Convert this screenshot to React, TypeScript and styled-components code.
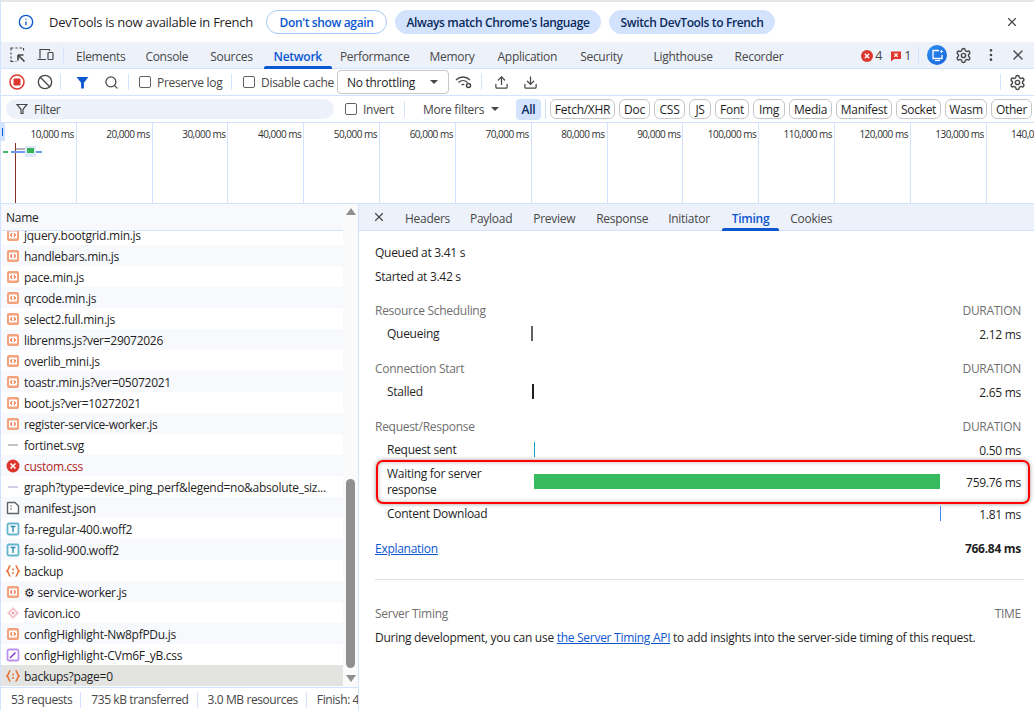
import React from "react";
import styled, { createGlobalStyle } from "styled-components";
import { Ban, Download, EllipsisVertical, Info, Search, Settings, Upload, X } from "lucide-react";

const GlobalStyle = createGlobalStyle`
  html, body {
    margin: 0;
    padding: 0;
    background: #fff;
  }
  body {
    font-family: "Open Sans", "Noto Sans", "Liberation Sans", sans-serif;
    font-size: 12px;
    letter-spacing: -0.28px;
    color: #1f1f1f;
  }
  * {
    box-sizing: border-box;
  }
`;

const Page = styled.div`
  width: 1034px;
  height: 710px;
  overflow: hidden;
  display: flex;
  flex-direction: column;
  border-top: 2px solid #e6e6e6;
  border-left: 1px solid #d3e3fd;
`;

const InfoBar = styled.div`
  height: 40px;
  flex: none;
  display: flex;
  align-items: center;
  padding: 0 15px 0 17px;
`;

const InfoText = styled.span`
  margin-left: 15px;
  margin-right: 15px;
  width: 202px;
  font-size: 13px;
  white-space: nowrap;
`;

const Pill = styled.button<{ $outline?: boolean; $w: number }>`
  width: ${(p) => p.$w}px;
  height: 24px;
  padding: 0;
  margin-right: 8px;
  border-radius: 12px;
  font: inherit;
  font-weight: 600;
  letter-spacing: -0.36px;
  white-space: nowrap;
  border: 1px solid ${(p) => (p.$outline ? "#a8c7fa" : "#d3e3fd")};
  background: ${(p) => (p.$outline ? "#fff" : "#d3e3fd")};
  color: ${(p) => (p.$outline ? "#0b57d0" : "#0a2a5c")};
`;

const Spacer = styled.div`
  flex: 1;
`;

const TabBar = styled.div`
  height: 27px;
  flex: none;
  display: flex;
  align-items: center;
  padding-left: 9px;
  background: #edf2fa;
  border-bottom: 1px solid #d3e3fd;
`;

const TabIconBox = styled.div`
  display: flex;
  align-items: center;
  gap: 11px;
  padding-right: 9px;
  margin-right: 2px;
  height: 16px;
  border-right: 1px solid #d3e3fd;
`;

const Tab = styled.div<{ $active?: boolean; $pad?: number }>`
  position: relative;
  height: 100%;
  display: flex;
  align-items: center;
  padding: 2px 10px 0;
  margin-left: ${(p) => p.$pad ?? 0}px;
  white-space: nowrap;
  color: ${(p) => (p.$active ? "#0b57d0" : "#474747")};
  font-weight: ${(p) => (p.$active ? 600 : 400)};
  ${(p) =>
    p.$active &&
    `
    &::after {
      content: "";
      position: absolute;
      left: 0;
      right: 0;
      bottom: -1px;
      height: 3px;
      border-radius: 2px 2px 0 0;
      background: #0b57d0;
    }
  `}
`;

const Counter = styled.div`
  display: flex;
  align-items: center;
  gap: 1px;
  margin-right: 7px;
  padding-top: 1px;
  color: #474747;
  font-size: 12.5px;
`;

const VerticalRule = styled.div`
  width: 1px;
  height: 16px;
  flex: none;
  background: #d3e3fd;
`;

const TabActions = styled.div`
  display: flex;
  align-items: center;
  padding-right: 3px;
`;

const ActionSlot = styled.div`
  width: 27px;
  display: flex;
  justify-content: center;
  color: #474747;
`;

const AiBadge = styled.div`
  width: 20px;
  height: 20px;
  margin: 0 3px 0 8px;
  border-radius: 50%;
  display: flex;
  align-items: center;
  justify-content: center;
  background: linear-gradient(135deg, #2c8df4, #1a66d8);
`;

const Toolbar = styled.div`
  height: 27px;
  flex: none;
  display: flex;
  align-items: center;
  border-bottom: 1px solid #d3e3fd;
  color: #474747;
`;

const ToolSlot = styled.div<{ $w: number }>`
  width: ${(p) => p.$w}px;
  flex: none;
  display: flex;
  justify-content: center;
  align-items: center;
`;

const CheckLabel = styled.label<{ $w: number }>`
  width: ${(p) => p.$w}px;
  flex: none;
  display: flex;
  align-items: center;
  gap: 6px;
  color: #474747;
  white-space: nowrap;
`;

const CheckBox = styled.span`
  width: 12px;
  height: 12px;
  flex: none;
  border: 1px solid #5f6368;
  border-radius: 2px;
  background: #fff;
`;

const ThrottleSelect = styled.div`
  width: 112px;
  height: 24px;
  flex: none;
  margin-left: 6px;
  padding: 0 10px 0 9px;
  display: flex;
  align-items: center;
  justify-content: space-between;
  border: 1px solid #c7c7c7;
  border-radius: 4px;
  color: #1f1f1f;
`;

const CaretDown = styled.span`
  width: 0;
  height: 0;
  border-left: 4px solid transparent;
  border-right: 4px solid transparent;
  border-top: 4px solid #474747;
`;

const FilterBar = styled.div`
  height: 27px;
  flex: none;
  display: flex;
  align-items: center;
  padding-left: 5px;
  border-bottom: 1px solid #d3e3fd;
`;

const FilterInput = styled.div`
  width: 328px;
  height: 20px;
  flex: none;
  display: flex;
  align-items: center;
  gap: 6px;
  padding-left: 10px;
  margin-right: 11px;
  border-radius: 10px;
  background: #edf2fa;
  color: #474747;
`;

const MoreFilters = styled.div`
  display: flex;
  align-items: center;
  gap: 7px;
  margin-left: 18px;
  width: 93px;
  color: #474747;
`;

const TypeAll = styled.div`
  width: 25px;
  height: 21px;
  flex: none;
  display: flex;
  align-items: center;
  justify-content: center;
  border-radius: 4px;
  background: #d3e3fd;
  font-weight: 600;
  color: #0a2a5c;
`;

const Chips = styled.div`
  display: flex;
  gap: 4px;
  margin-left: 4px;
  padding-left: 4px;
  border-left: 1px solid #d3e3fd;
`;

const Chip = styled.div<{ $w: number }>`
  width: ${(p) => p.$w}px;
  height: 20px;
  flex: none;
  display: flex;
  align-items: center;
  justify-content: center;
  border: 1px solid #c7c7c7;
  border-radius: 6px;
  color: #1f1f1f;
  white-space: nowrap;
`;

const Overview = styled.div`
  position: relative;
  height: 81px;
  flex: none;
  display: flex;
  overflow: hidden;
  border-bottom: 1px solid #d3e3fd;
`;

const GridCell = styled.div`
  width: 75.83px;
  flex: none;
  padding: 4px 2px 0 0;
  display: flex;
  justify-content: flex-end;
  white-space: nowrap;
  font-size: 10px;
  letter-spacing: -0.5px;
  color: #303030;
  border-right: 1px solid #d3e3fd;
`;

const OverviewChart = styled.svg`
  position: absolute;
  left: 0;
  top: 0;
`;

const Split = styled.div`
  flex: 1;
  min-height: 0;
  display: flex;
`;

const LeftPane = styled.div`
  width: 358px;
  flex: none;
  display: flex;
  flex-direction: column;
  border-right: 1px solid #d3e3fd;
`;

const TableWrap = styled.div`
  flex: 1;
  min-height: 0;
  display: flex;
`;

const TableColumn = styled.div`
  width: 342px;
  flex: none;
  display: flex;
  flex-direction: column;
`;

const NameHeader = styled.div`
  height: 27px;
  flex: none;
  padding: 1px 0 0 5px;
  display: flex;
  align-items: center;
  background: #f8f9fd;
  border-bottom: 1px solid #d3e3fd;
  color: #1f1f1f;
`;

const RowList = styled.div`
  flex: 1;
  min-height: 0;
  overflow: hidden;
`;

const RowScroll = styled.div`
  margin-top: -7px;
`;

const FileRow = styled.div<{ $selected?: boolean; $odd?: boolean; $error?: boolean }>`
  height: 21px;
  display: flex;
  align-items: center;
  gap: 4px;
  padding: 1px 0 0 5px;
  white-space: nowrap;
  background: ${(p) => (p.$selected ? "#e3e3e1" : p.$odd ? "#f8f9fd" : "#fff")};
  color: ${(p) => (p.$error ? "#b3261e" : "#1f1f1f")};
`;

const Scrollbar = styled.div`
  flex: 1;
  display: flex;
  flex-direction: column;
  align-items: center;
  padding: 4px 0 5px;
  background: #fafafa;
`;

const ArrowUp = styled.span`
  width: 0;
  height: 0;
  flex: none;
  border-left: 5px solid transparent;
  border-right: 5px solid transparent;
  border-bottom: 7px solid #8f8f8f;
`;

const ArrowDown = styled(ArrowUp)`
  border-bottom: 0;
  border-top: 7px solid #8f8f8f;
  margin-top: 7px;
`;

const Thumb = styled.div`
  width: 9px;
  height: 189px;
  flex: none;
  margin-top: auto;
  border-radius: 5px;
  background: #8f8f8f;
`;

const StatusBar = styled.div`
  height: 23px;
  flex: none;
  display: flex;
  align-items: center;
  padding-top: 1px;
  overflow: hidden;
  white-space: nowrap;
  border-top: 1px solid #d3e3fd;
  color: #474747;
  letter-spacing: -0.4px;
`;

const StatusItem = styled.div`
  height: 16px;
  display: flex;
  align-items: center;
  padding: 0 8px 0 10px;
  border-right: 1px solid #d3e3fd;
  &:last-child {
    border-right: 0;
  }
`;

const RightPane = styled.div`
  flex: 1;
  min-width: 0;
  display: flex;
  flex-direction: column;
`;

const DetailTabs = styled.div`
  height: 27px;
  flex: none;
  display: flex;
  align-items: center;
  padding-left: 13px;
  background: #edf2fa;
  border-bottom: 1px solid #d3e3fd;
`;

const CloseSlot = styled.div`
  width: 23px;
  display: flex;
  color: #474747;
`;

const TimingBody = styled.div`
  flex: 1;
  padding: 9px 13px 0 16px;
`;

const Line = styled.div`
  height: 24px;
  display: flex;
  align-items: center;
  color: #1f1f1f;
  white-space: nowrap;
`;

const SectionHead = styled.div`
  height: 24px;
  margin-top: 10px;
  display: flex;
  align-items: center;
  justify-content: space-between;
  color: #6f6f6f;
`;

const TimingRow = styled.div<{ $tall?: boolean; $marked?: boolean }>`
  position: relative;
  height: ${(p) => (p.$tall ? 40 : 24)}px;
  display: flex;
  align-items: center;
  padding-left: 12px;
  ${(p) =>
    p.$marked &&
    `
    &::after {
      content: "";
      position: absolute;
      top: -2px;
      bottom: -2px;
      left: 1px;
      right: -9px;
      border: 2px solid #f00;
      border-radius: 7px;
      box-shadow: 0 0 4px rgba(0, 0, 0, 0.4), inset 0 0 4px rgba(0, 0, 0, 0.3);
    }
  `}
`;

const RowLabel = styled.div`
  width: 144px;
  flex: none;
  padding-right: 34px;
  line-height: 16px;
`;

const BarTrack = styled.div`
  width: 410px;
  flex: none;
  display: flex;
  margin-top: -1px;
`;

const Bar = styled.div<{ $color: string; $min: number }>`
  height: 15px;
  min-width: ${(p) => p.$min}px;
  background: ${(p) => p.$color};
`;

const RowValue = styled.div`
  flex: 1;
  text-align: right;
  color: #1f1f1f;
`;

const TotalRow = styled.div`
  height: 24px;
  margin-top: 10px;
  display: flex;
  align-items: center;
  justify-content: space-between;
  font-weight: 700;
`;

const DocLink = styled.a`
  color: #0b57d0;
  text-decoration: underline;
  font-weight: 400;
`;

const Divider = styled.div`
  height: 1px;
  margin: 19px -3px 21px 0;
  background: #e0e0e0;
`;

type FileKind = "script" | "xhr" | "svg" | "error" | "graph" | "manifest" | "font" | "css" | "favicon";

function FileIcon({ kind }: { kind: FileKind }) {
  const shape = () => {
    switch (kind) {
      case "script":
        return (
          <>
            <rect x="1" y="1" width="12" height="12" rx="2" fill="#f4a27c" />
            <rect x="3" y="3.5" width="8" height="7" rx="0.5" fill="#fff" />
            <path d="M6 5.3 4.6 7 6 8.7M8 5.3 9.4 7 8 8.7" stroke="#e8622a" fill="none" strokeWidth="1.1" />
          </>
        );
      case "xhr":
        return (
          <>
            <path
              d="M4.5 1.5C2.5 1.5 3.2 5.8 1 7c2.2 1.2 1.5 5.5 3.5 5.5M9.5 1.5c2 0 1.3 4.3 3.5 5.5-2.2 1.2-1.5 5.5-3.5 5.5"
              stroke="#e8743b"
              strokeWidth="1.7"
              fill="none"
            />
            <circle cx="7" cy="5.5" r="1" fill="#e8743b" />
            <circle cx="7" cy="9" r="1" fill="#e8743b" />
          </>
        );
      case "svg":
        return <rect x="2" y="6.5" width="10" height="1" fill="#8a8a8a" />;
      case "error":
        return (
          <>
            <circle cx="7" cy="7" r="6.5" fill="#dc362e" />
            <path d="M4.5 4.5l5 5M9.5 4.5l-5 5" stroke="#fff" strokeWidth="1.6" />
          </>
        );
      case "graph":
        return <rect x="2" y="6" width="10" height="2" fill="#d0d0e8" />;
      case "manifest":
        return (
          <>
            <path d="M1.5 1.5h7.5l3.5 3.5v7.5h-11z" fill="#fff" stroke="#5f6368" strokeWidth="1.4" strokeLinejoin="round" />
            <path d="M4.5 5h1.2M4.5 8h1.2" stroke="#5f6368" strokeWidth="1.3" />
          </>
        );
      case "font":
        return (
          <>
            <rect x="1.5" y="1.5" width="11" height="11" rx="1.5" fill="#fff" stroke="#62b5cc" strokeWidth="1.8" />
            <path d="M4.5 4.5h5M7 4.5v5.5" stroke="#2a8ba8" strokeWidth="1.4" fill="none" />
          </>
        );
      case "css":
        return (
          <>
            <rect x="1.5" y="1.5" width="11" height="11" rx="1.5" fill="#fff" stroke="#bd92f2" strokeWidth="1.8" />
            <path d="M4 10l5.5-5.5" stroke="#8430ce" strokeWidth="1.5" />
          </>
        );
      case "favicon":
        return (
          <>
            <path d="M7 1 13 7 7 13 1 7z" fill="#f3c6cc" />
            <path d="M7 3.8 10.2 7 7 10.2 3.8 7z" fill="#fff" />
            <path d="M7 5.3 8.7 7 7 8.7 5.3 7z" fill="#e5a3ac" />
          </>
        );
    }
  };
  return (
    <svg width="14" height="14" viewBox="0 0 14 14" style={{ flex: "none" }}>
      {shape()}
    </svg>
  );
}

function SelectIcon() {
  return (
    <svg width="16" height="16" viewBox="0 0 16 16" fill="none" stroke="#474747" strokeWidth="1.2">
      <path d="M1 3.5V1h2.5M5.5 1h2M9.5 1h2.5M13.5 1v2.5M1 5.5v2M1 9.5v2M1 13v1.5h2.5M5.5 14.5h1" />
      <path d="M8 8h5.5M8 8v5.5M8 8l6.5 6.5" strokeWidth="1.7" />
    </svg>
  );
}

function DeviceIcon() {
  return (
    <svg width="17" height="14" viewBox="0 0 17 14" fill="none" stroke="#474747" strokeWidth="1.2">
      <path d="M3 10.5V1.5h9.5V3M0.5 11.5H9" />
      <rect x="11" y="4.5" width="5" height="7" rx="0.8" />
    </svg>
  );
}

function RecordIcon() {
  return (
    <svg width="16" height="16" viewBox="0 0 16 16">
      <circle cx="8" cy="8" r="7" fill="none" stroke="#dc362e" strokeWidth="1.5" />
      <rect x="4.5" y="4.5" width="7" height="7" rx="1" fill="#dc362e" />
    </svg>
  );
}

function FunnelIcon({ color, size }: { color: string; size: number }) {
  return (
    <svg width={size} height={size} viewBox="0 0 12 12">
      <path d="M0.5 1h11L7.3 6.3V11.5H4.7V6.3z" fill={color} />
    </svg>
  );
}

function OutlineFunnel() {
  return (
    <svg width="12" height="12" viewBox="0 0 12 12" fill="none" stroke="#474747" strokeWidth="1.2">
      <path d="M1 1.5h10L7 6.3v4.2H5V6.3z" />
    </svg>
  );
}

function WifiGearIcon() {
  return (
    <svg width="18" height="14" viewBox="0 0 18 14" fill="none" stroke="#474747" strokeWidth="1.3">
      <path d="M1 5c4-4 10-4 14 0M3.5 7.5c2.6-2.4 6.4-2.4 9 0M6.5 10c.8-.6 2-.7 2.8-.4" />
      <circle cx="13.5" cy="10.5" r="2" strokeWidth="1.5" />
    </svg>
  );
}

function ErrorBadge() {
  return (
    <svg width="14" height="14" viewBox="0 0 14 14">
      <circle cx="7" cy="7" r="6" fill="#dc362e" />
      <path d="M4.8 4.8l4.4 4.4M9.2 4.8l-4.4 4.4" stroke="#fff" strokeWidth="1.4" />
    </svg>
  );
}

function IssueBadge() {
  return (
    <svg width="14" height="14" viewBox="0 0 14 14">
      <path d="M2 2.5h10v7.5H5L2 12.5z" fill="#dc362e" />
      <path d="M5.3 4.5l3.4 3.4M8.7 4.5 5.3 7.9" stroke="#fff" strokeWidth="1.1" />
    </svg>
  );
}

function AiIcon() {
  return (
    <svg width="13" height="13" viewBox="0 0 13 13" fill="none">
      <path d="M8 1.5H2v8h9V6" stroke="#fff" strokeWidth="1.3" />
      <path d="M4 11.5h5" stroke="#fff" strokeWidth="1.2" />
      <path d="M10.5 0.5l.6 1.4 1.4.6-1.4.6-.6 1.4-.6-1.4-1.4-.6 1.4-.6z" fill="#fff" />
    </svg>
  );
}

const TOP_TABS: [string, number][] = [
  ["Elements", 0],
  ["Console", 0],
  ["Sources", 2],
  ["Network", 1],
  ["Performance", -2],
  ["Memory", 0],
  ["Application", 3],
  ["Security", 3],
  ["Lighthouse", 11],
  ["Recorder", 2],
];

const DETAIL_TABS: [string, number][] = [
  ["Headers", 0],
  ["Payload", 0],
  ["Preview", 1],
  ["Response", 1],
  ["Initiator", 0],
  ["Timing", 2],
  ["Cookies", 1],
];

const TYPE_CHIPS: [string, number][] = [
  ["Fetch/XHR", 65],
  ["Doc", 31],
  ["CSS", 31],
  ["JS", 22],
  ["Font", 34],
  ["Img", 32],
  ["Media", 43],
  ["Manifest", 56],
  ["Socket", 45],
  ["Wasm", 42],
  ["Other", 41],
];

const FILES: [string, FileKind][] = [
  ["jquery.bootgrid.min.js", "script"],
  ["handlebars.min.js", "script"],
  ["pace.min.js", "script"],
  ["qrcode.min.js", "script"],
  ["select2.full.min.js", "script"],
  ["librenms.js?ver=29072026", "script"],
  ["overlib_mini.js", "script"],
  ["toastr.min.js?ver=05072021", "script"],
  ["boot.js?ver=10272021", "script"],
  ["register-service-worker.js", "script"],
  ["fortinet.svg", "svg"],
  ["custom.css", "error"],
  ["graph?type=device_ping_perf&legend=no&absolute_siz...", "graph"],
  ["manifest.json", "manifest"],
  ["fa-regular-400.woff2", "font"],
  ["fa-solid-900.woff2", "font"],
  ["backup", "xhr"],
  ["⚙ service-worker.js", "script"],
  ["favicon.ico", "favicon"],
  ["configHighlight-Nw8pfPDu.js", "script"],
  ["configHighlight-CVm6F_yB.css", "css"],
  ["backups?page=0", "xhr"],
];

const TOTAL_MS = 766.84;
const TRACK_PX = 410;
const px = (ms: number) => (ms / TOTAL_MS) * TRACK_PX;

function Phase(props: {
  label: string;
  start: number;
  ms: number;
  color: string;
  min?: number;
  tall?: boolean;
  marked?: boolean;
}) {
  return (
    <TimingRow $tall={props.tall} $marked={props.marked}>
      <RowLabel>{props.label}</RowLabel>
      <BarTrack>
        <Bar $color={props.color} $min={props.min ?? 1} style={{ marginLeft: px(props.start), width: px(props.ms) }} />
      </BarTrack>
      <RowValue>{props.ms.toFixed(2)} ms</RowValue>
    </TimingRow>
  );
}

export default function App() {
  return (
    <Page>
      <GlobalStyle />
      <InfoBar>
        <Info size={16} color="#0b57d0" />
        <InfoText>DevTools is now available in French</InfoText>
        <Pill $outline $w={121}>
          Don't show again
        </Pill>
        <Pill $w={206}>Always match Chrome's language</Pill>
        <Pill $w={166}>Switch DevTools to French</Pill>
        <Spacer />
        <X size={14} color="#474747" />
      </InfoBar>

      <TabBar>
        <TabIconBox>
          <SelectIcon />
          <DeviceIcon />
        </TabIconBox>
        {TOP_TABS.map(([name, pad]) => (
          <Tab key={name} $active={name === "Network"} $pad={pad}>
            {name}
          </Tab>
        ))}
        <Spacer />
        <Counter>
          <ErrorBadge />4
        </Counter>
        <Counter>
          <IssueBadge />1
        </Counter>
        <TabActions>
          <VerticalRule />
          <AiBadge>
            <AiIcon />
          </AiBadge>
          <ActionSlot>
            <Settings size={17} />
          </ActionSlot>
          <ActionSlot>
            <EllipsisVertical size={16} />
          </ActionSlot>
          <ActionSlot>
            <X size={16} />
          </ActionSlot>
        </TabActions>
      </TabBar>

      <Toolbar>
        <ToolSlot $w={32}>
          <RecordIcon />
        </ToolSlot>
        <ToolSlot $w={24}>
          <Ban size={16} />
        </ToolSlot>
        <ToolSlot $w={6}>
          <VerticalRule />
        </ToolSlot>
        <ToolSlot $w={38}>
          <FunnelIcon color="#0b57d0" size={13} />
        </ToolSlot>
        <ToolSlot $w={20}>
          <Search size={15} />
        </ToolSlot>
        <ToolSlot $w={14}>
          <VerticalRule />
        </ToolSlot>
        <ToolSlot $w={4} />
        <CheckLabel $w={92}>
          <CheckBox />
          Preserve log
        </CheckLabel>
        <ToolSlot $w={1}>
          <VerticalRule />
        </ToolSlot>
        <ToolSlot $w={11} />
        <CheckLabel $w={88}>
          <CheckBox />
          Disable cache
        </CheckLabel>
        <ThrottleSelect>
          No throttling
          <CaretDown />
        </ThrottleSelect>
        <ToolSlot $w={30}>
          <WifiGearIcon />
        </ToolSlot>
        <ToolSlot $w={5}>
          <VerticalRule />
        </ToolSlot>
        <ToolSlot $w={35}>
          <Upload size={15} />
        </ToolSlot>
        <ToolSlot $w={22}>
          <Download size={15} />
        </ToolSlot>
        <Spacer />
        <VerticalRule />
        <ToolSlot $w={33}>
          <Settings size={17} />
        </ToolSlot>
      </Toolbar>

      <FilterBar>
        <FilterInput>
          <OutlineFunnel />
          Filter
        </FilterInput>
        <CheckLabel $w={59}>
          <CheckBox />
          Invert
        </CheckLabel>
        <VerticalRule />
        <MoreFilters>
          More filters
          <CaretDown />
        </MoreFilters>
        <TypeAll>All</TypeAll>
        <Chips>
          {TYPE_CHIPS.map(([name, width]) => (
            <Chip key={name} $w={width}>
              {name}
            </Chip>
          ))}
        </Chips>
      </FilterBar>

      <Overview>
        {Array.from({ length: 14 }, (_, i) => (
          <GridCell key={i}>{((i + 1) * 10).toLocaleString("en-US")},000 ms</GridCell>
        ))}
        <OverviewChart width="60" height="80" viewBox="0 0 60 80">
          <rect x="0" y="0" width="4" height="18" rx="1" fill="#d3e3fd" />
          <rect x="1" y="5" width="1" height="8" fill="#0b57d0" />
          <rect x="14" y="20" width="1" height="60" fill="#8c2f2a" />
          <rect x="2" y="28" width="5" height="2" fill="#3dbb61" />
          <rect x="10" y="28" width="31" height="2" fill="#6c9cf0" />
          <rect x="15" y="25" width="10" height="2" fill="#b5b5b5" />
          <rect x="24" y="23" width="11" height="11" fill="#dde8fa" />
          <rect x="26" y="25" width="7" height="5" fill="#36b35a" />
        </OverviewChart>
      </Overview>

      <Split>
        <LeftPane>
          <TableWrap>
            <TableColumn>
              <NameHeader>Name</NameHeader>
              <RowList>
                <RowScroll>
                  {FILES.map(([name, kind], i) => (
                    <FileRow
                      key={name}
                      $odd={i % 2 === 1}
                      $selected={name === "backups?page=0"}
                      $error={kind === "error"}
                    >
                      <FileIcon kind={kind} />
                      {name}
                    </FileRow>
                  ))}
                </RowScroll>
              </RowList>
            </TableColumn>
            <Scrollbar>
              <ArrowUp />
              <Thumb />
              <ArrowDown />
            </Scrollbar>
          </TableWrap>
          <StatusBar>
            <StatusItem>53 requests</StatusItem>
            <StatusItem>735 kB transferred</StatusItem>
            <StatusItem>3.0 MB resources</StatusItem>
            <StatusItem>Finish: 4</StatusItem>
          </StatusBar>
        </LeftPane>

        <RightPane>
          <DetailTabs>
            <CloseSlot>
              <X size={14} />
            </CloseSlot>
            {DETAIL_TABS.map(([name, pad]) => (
              <Tab key={name} $active={name === "Timing"} $pad={pad}>
                {name}
              </Tab>
            ))}
          </DetailTabs>
          <TimingBody>
            <Line>Queued at 3.41 s</Line>
            <Line>Started at 3.42 s</Line>

            <SectionHead>
              <span>Resource Scheduling</span>
              <span>DURATION</span>
            </SectionHead>
            <Phase label="Queueing" start={0} ms={2.12} color="#5f6368" min={2} />

            <SectionHead>
              <span>Connection Start</span>
              <span>DURATION</span>
            </SectionHead>
            <Phase label="Stalled" start={2.12} ms={2.65} color="#1f1f1f" />

            <SectionHead>
              <span>Request/Response</span>
              <span>DURATION</span>
            </SectionHead>
            <Phase label="Request sent" start={4.77} ms={0.5} color="#0f9fbf" />
            <Phase label="Waiting for server response" start={5.27} ms={759.76} color="#36bc5f" tall marked />
            <Phase label="Content Download" start={765.03} ms={1.81} color="#4285f4" />

            <TotalRow>
              <DocLink href="#">Explanation</DocLink>
              <span>766.84 ms</span>
            </TotalRow>

            <Divider />

            <SectionHead>
              <span>Server Timing</span>
              <span>TIME</span>
            </SectionHead>
            <Line>
              During development, you can use&nbsp;<DocLink href="#">the Server Timing API</DocLink>&nbsp;to add insights
              into the server-side timing of this request.
            </Line>
          </TimingBody>
        </RightPane>
      </Split>
    </Page>
  );
}
